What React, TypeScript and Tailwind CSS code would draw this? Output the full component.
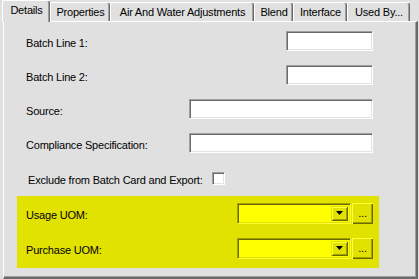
import React from "react";

const tabs = [
  { name: "Details", w: "w-[48px]" },
  { name: "Properties", w: "w-[60px]" },
  { name: "Air And Water Adjustments", w: "w-[144px]" },
  { name: "Blend", w: "w-[39px]" },
  { name: "Interface", w: "w-[54px]" },
  { name: "Used By...", w: "w-[63px]" },
];

const TextBox = ({ w }: { w: string }) => (
  <div
    className={`${w} h-[20px] bg-white border-t border-l border-t-[#a0a0a0] border-l-[#a0a0a0] border-b border-r border-b-white border-r-white shadow-[inset_1px_1px_0_#696969,inset_-1px_-1px_0_#e3e3e3]`}
  />
);

const Row = ({ label, children }: { label: string; children: React.ReactNode }) => (
  <div className="flex items-center h-[34px] pl-[9px] pr-[6px]">
    <span className="flex-1 mt-[4px]">{label}</span>
    {children}
  </div>
);

const Combo = () => (
  <div className="flex items-center gap-[1px]">
    <div className="w-[114px] h-[21px] bg-[#ffff00] flex justify-end items-stretch border-t border-l border-t-[#a0a000] border-l-[#a0a000] border-b border-r border-b-[#ffff30] border-r-[#ffff30] shadow-[inset_1px_1px_0_#6a6a00,inset_-1px_-1px_0_#e2e200] p-[2px]">
      <div className="w-[17px] bg-[#e2e200] flex items-center justify-center shadow-[inset_1px_1px_0_#e2e200,inset_-1px_-1px_0_#6a6a00,inset_2px_2px_0_#ffff40,inset_-2px_-2px_0_#a0a000]">
        <svg width="8" height="5" viewBox="0 0 8 5">
          <path d="M0 0h7L3.5 4z" fill="#000" />
        </svg>
      </div>
    </div>
    <div className="w-[21px] h-[21px] bg-[#e2e200] flex items-center justify-center leading-none pb-[1px] shadow-[inset_1px_1px_0_#ffff40,inset_-1px_-1px_0_#6a6a00,inset_-2px_-2px_0_#a0a000]">
      ...
    </div>
  </div>
);

export default function App() {
  return (
    <div className="w-[419px] h-[279px] bg-[#e0e0e0] font-['Liberation_Sans',Arial,sans-serif] text-[11px] tracking-[-0.2px] text-black flex flex-col">
      <div className="flex items-end h-[21px] pl-[2px] relative z-10">
        {tabs.map((t, i) => (
          <div
            key={t.name}
            className={`${t.w} flex items-center justify-center border-l border-t border-white rounded-tl-[2px] rounded-tr-[2px] shadow-[inset_-1px_0_0_#696969,inset_-2px_0_0_#a0a0a0] ${
              i === 0 ? "h-[22px] -mb-[1px] pb-[3px] bg-[#e0e0e0]" : "h-[19px] bg-[#e0e0e0]"
            }`}
          >
            {t.name}
          </div>
        ))}
      </div>
      <div className="ml-[3px] w-[415px] h-[258px] border-t border-l border-white border-r-2 border-b-2 border-r-[#696969] border-b-[#696969] shadow-[inset_-1px_-1px_0_#a0a0a0] flex flex-col pt-[2px] pl-[13px] pr-[37px]">
        <Row label="Batch Line 1:">
          <TextBox w="w-[87px]" />
        </Row>
        <Row label="Batch Line 2:">
          <TextBox w="w-[87px]" />
        </Row>
        <Row label="Source:">
          <TextBox w="w-[184px]" />
        </Row>
        <Row label="Compliance Specification:">
          <TextBox w="w-[184px]" />
        </Row>
        <div className="flex items-center h-[36px] pl-[11px]">
          <span className="w-[184px] mt-[4px]">Exclude from Batch Card and Export:</span>
          <div className="w-[13px] h-[13px] bg-white border-t border-l border-[#a0a0a0] border-b border-r border-b-white border-r-white shadow-[inset_1px_1px_0_#696969,inset_-1px_-1px_0_#e3e3e3]" />
        </div>
        <div className="bg-[#e2e200] h-[72px] flex flex-col pt-[7px] gap-[14px] pl-[9px] pr-[6px]">
          <div className="flex items-center h-[21px]">
            <span className="flex-1 mt-[4px]">Usage UOM:</span>
            <Combo />
          </div>
          <div className="flex items-center h-[21px]">
            <span className="flex-1 mt-[4px]">Purchase UOM:</span>
            <Combo />
          </div>
        </div>
      </div>
    </div>
  );
}
